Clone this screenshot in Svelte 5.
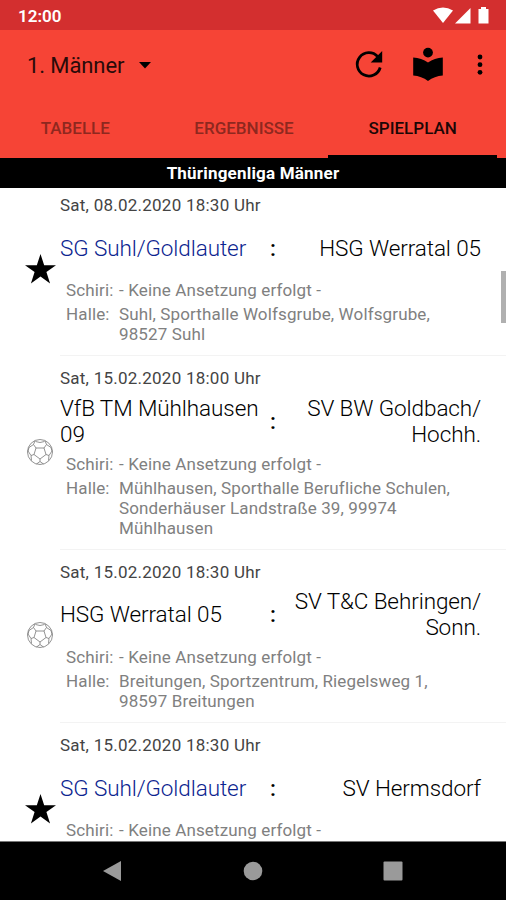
<script lang="ts">
  type Match = {
    date: string;
    home: string;
    away: string[];
    own?: boolean;
    referee: string;
    venue?: string[];
  };

  const none = "- Keine Ansetzung erfolgt -";
  const tabs = ["TABELLE", "ERGEBNISSE", "SPIELPLAN"];
  let active = $state(2);

  const matches: Match[] = [
    {
      date: "Sat, 08.02.2020 18:30 Uhr",
      home: "SG Suhl/Goldlauter",
      away: ["HSG Werratal 05"],
      own: true,
      referee: none,
      venue: ["Suhl, Sporthalle Wolfsgrube, Wolfsgrube,", "98527 Suhl"],
    },
    {
      date: "Sat, 15.02.2020 18:00 Uhr",
      home: "VfB TM Mühlhausen 09",
      away: ["SV BW Goldbach/", "Hochh."],
      referee: none,
      venue: [
        "Mühlhausen, Sporthalle Berufliche Schulen,",
        "Sonderhäuser Landstraße 39, 99974",
        "Mühlhausen",
      ],
    },
    {
      date: "Sat, 15.02.2020 18:30 Uhr",
      home: "HSG Werratal 05",
      away: ["SV T&C Behringen/", "Sonn."],
      referee: none,
      venue: ["Breitungen, Sportzentrum, Riegelsweg 1,", "98597 Breitungen"],
    },
    {
      date: "Sat, 15.02.2020 18:30 Uhr",
      home: "SG Suhl/Goldlauter",
      away: ["SV Hermsdorf"],
      own: true,
      referee: none,
    },
  ];
</script>

<div class="screen">
  <div class="status">
    <span>12:00</span>
    <svg width="58" height="18" viewBox="0 0 58 18" fill="#fff">
      <path d="M0 3.5Q10-2.5 20 3.5L10 16Z" />
      <path d="M37.500 1v15.500H22Z" />
      <path d="M45.500 2h2.500V0h5v2h2.500v14.500h-10Z" />
    </svg>
  </div>

  <header>
    <div class="toolbar">
      <button class="team-select">
        1. Männer
        <svg width="12" height="7" viewBox="0 0 12 7"><path d="M0 0h12L6 6.500Z" /></svg>
      </button>
      <button class="refresh" aria-label="refresh">
        <svg width="40" height="40" viewBox="0 0 40 40">
          <path
            d="M31.200 22.500A11.700 11.700 0 1 1 28.600 11.500"
            fill="none"
            stroke="#000"
            stroke-width="2.800"
          />
          <path d="M33.200 6v11.500H21.700Z" />
        </svg>
      </button>
      <button class="reader" aria-label="rules">
        <svg width="40" height="40" viewBox="0 0 40 40">
          <circle cx="20" cy="7.600" r="4.900" />
          <path d="M20 17.500Q13.500 12.800 5.200 12.400V30.500Q13.500 31.200 20 36Q26.500 31.200 34.800 30.500V12.400Q26.500 12.800 20 17.500Z" />
        </svg>
      </button>
      <button class="more" aria-label="more">
        <svg width="6" height="22" viewBox="0 0 6 22">
          <circle cx="3" cy="3" r="2.400" />
          <circle cx="3" cy="10.700" r="2.400" />
          <circle cx="3" cy="18.300" r="2.400" />
        </svg>
      </button>
    </div>
    <nav>
      {#each tabs as tab, i}
        <button class="tab" class:active={active === i} onclick={() => (active = i)}>{tab}</button>
      {/each}
    </nav>
  </header>

  <div class="league">Thüringenliga Männer</div>

  <main>
    <div class="list">
      {#each matches as match}
        <div class="match">
          <div class="marker" class:short={!match.venue}>
            {#if match.own}
              <svg width="31" height="30" viewBox="0 0 32 31">
                <path d="M16 0l3.800 11.500H32l-9.900 7.200L25.900 30.500 16 23.200 6.100 30.500l3.800-11.800L0 11.500h12.200Z" />
              </svg>
            {:else}
              <svg class="ball" width="28" height="28" viewBox="0 0 28 28">
                <circle cx="14" cy="14" r="12.500" />
                <path
                  d="M10 10h8l2 6.500-6 4.500-6-4.500ZM10 10L7.500 6.500 9 2.800M18 10l2.500-3.500L19 2.800M7.500 6.500L3 9.500 2 13l3 4.500 3-1M20.500 6.500L25 9.500l1 3.500-3 4.500-3-1M5 17.500l.500 5M23 17.500l-.500 5M14 21v2.500L10.500 26M14 23.500l3.500 2.500M9.500 3.500q4.500 2 9 0"
                />
              </svg>
            {/if}
          </div>
          <div class="body">
            <div class="date">{match.date}</div>
            <div class="teams">
              <span class="home" class:own={match.own}>{match.home}</span>
              <span class="colon">:</span>
              <div class="away">
                {#each match.away as line}
                  <div>{line}</div>
                {/each}
              </div>
            </div>
            <div class="info">
              <span>Schiri:</span>
              <span>{match.referee}</span>
            </div>
            {#if match.venue}
              <div class="info hall">
                <span>Halle:</span>
                <div>
                  {#each match.venue as line}
                    <div>{line}</div>
                  {/each}
                </div>
              </div>
            {/if}
          </div>
        </div>
      {/each}
    </div>
    <div class="scrollbar"></div>
  </main>

  <footer>
    <svg width="20" height="22" viewBox="0 0 20 22"><path d="M19 1v20L1 11Z" /></svg>
    <svg width="20" height="20" viewBox="0 0 20 20"><circle cx="10" cy="10" r="9.300" /></svg>
    <svg width="20" height="20" viewBox="0 0 20 20"><rect x=".5" y=".5" width="19" height="19" rx="1" /></svg>
  </footer>
</div>

<style>
  .screen {
    width: 506px;
    height: 900px;
    display: flex;
    flex-direction: column;
    overflow: hidden;
    background: #fff;
    color: #000;
    font-family: Roboto, sans-serif;
  }

  svg {
    display: block;
  }

  button {
    padding: 0;
    border: none;
    background: none;
    color: inherit;
    font: inherit;
  }

  .status {
    height: 30px;
    flex: none;
    display: flex;
    align-items: center;
    justify-content: space-between;
    padding: 2px 15px 0 18px;
    box-sizing: border-box;
    background: #d32f2f;
    color: #fff;
    font-size: 17px;
    font-weight: 600;
  }

  header {
    height: 128px;
    flex: none;
    background: #f64436;
  }

  .toolbar {
    height: 70px;
    display: flex;
    align-items: center;
    padding: 0 23px 0 27px;
  }

  .team-select {
    display: flex;
    align-items: center;
    gap: 15px;
    margin-right: auto;
    font-size: 22px;
    letter-spacing: -0.1px;
    color: #2a0b09;
  }

  .team-select svg {
    fill: #000;
  }

  .reader {
    margin-left: 19px;
  }

  .more {
    margin-left: 29px;
  }

  nav {
    height: 58px;
    display: flex;
    margin-left: -9px;
    padding-right: 9px;
  }

  .tab {
    flex: 1;
    border-bottom: 3px solid transparent;
    font-size: 17px;
    font-weight: 500;
    color: #8e281f;
  }

  .tab.active {
    border-color: #000;
    color: #1c0706;
  }

  .league {
    height: 30px;
    flex: none;
    background: #000;
    color: #fff;
    font-size: 17px;
    font-weight: 700;
    letter-spacing: 0.2px;
    line-height: 31px;
    text-align: center;
  }

  main {
    flex: 1;
    min-height: 0;
    position: relative;
    overflow: hidden;
    border-bottom: 1px solid #777;
  }

  .list {
    margin-top: -5px;
  }

  .match {
    display: flex;
    padding-left: 20px;
  }

  .marker {
    width: 40px;
    display: flex;
    align-items: center;
    justify-content: center;
    padding-bottom: 2px;
  }

  .marker.short {
    align-items: flex-start;
    padding-top: 71px;
  }

  .ball {
    fill: none;
    stroke: #777;
    stroke-width: 0.8;
  }

  .body {
    flex: 1;
    padding: 12px 0 11.200px;
    border-bottom: 1px solid #f3f3f3;
  }

  .date {
    line-height: 20px;
    padding-bottom: 6.700px;
    font-size: 17px;
    letter-spacing: 0.240px;
    color: #444;
  }

  .teams {
    height: 52px;
    display: flex;
    align-items: center;
    padding-right: 25px;
    font-size: 22.500px;
    font-weight: 300;
    letter-spacing: -0.090px;
    line-height: 26px;
  }

  .home {
    width: 201px;
  }

  .own {
    color: #0c2490;
  }

  .colon {
    width: 24px;
    text-align: center;
    font-weight: 500;
  }

  .away {
    width: 196px;
    text-align: right;
    white-space: nowrap;
  }

  .info {
    display: flex;
    padding: 6.500px 0 0 6px;
    font-size: 17px;
    letter-spacing: 0.130px;
    line-height: 20px;
    color: #808080;
  }

  .info > :first-child {
    width: 53px;
  }

  .info.hall {
    padding-top: 4px;
  }

  .scrollbar {
    position: absolute;
    top: 83px;
    right: 0;
    width: 5px;
    height: 52px;
    background: #b0b0b0;
  }

  footer {
    height: 58px;
    flex: none;
    display: flex;
    align-items: center;
    justify-content: space-between;
    padding: 0 103px 0 102px;
    box-sizing: border-box;
    background: #000;
    fill: #9a9a9a;
  }
</style>
